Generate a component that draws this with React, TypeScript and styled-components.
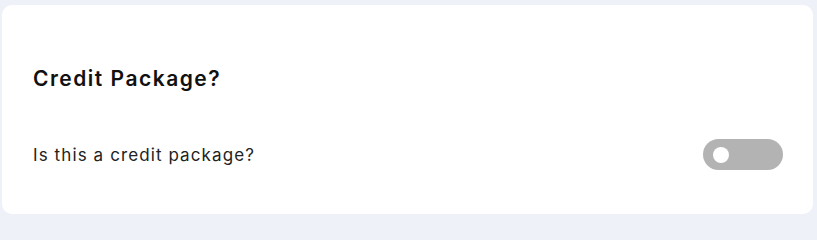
import React from "react";
import styled, { createGlobalStyle } from "styled-components";

const Global = createGlobalStyle`
  html, body { margin: 0; padding: 0; background: #eff1f9; }
  body { font-family: "Inter", "Noto Sans", sans-serif; }
`;

const Page = styled.div`
  width: 817px;
  height: 218px;
  box-sizing: border-box;
  padding: 5px 4px 4px 2px;
  display: flex;
`;

const Card = styled.section`
  flex: 1;
  background: #ffffff;
  border-radius: 10px;
  box-sizing: border-box;
  padding: 62px 30px 0 31px;
  display: flex;
  flex-direction: column;
`;

const Title = styled.h2`
  margin: 0;
  font-family: "Inter", sans-serif;
  font-size: 21px;
  line-height: 24px;
  font-weight: 600;
  letter-spacing: 1.5px;
  color: #111111;
`;

const Row = styled.div`
  margin-top: 48px;
  display: flex;
  align-items: center;
  justify-content: space-between;
`;

const Label = styled.span`
  font-family: "Inter", sans-serif;
  font-size: 17px;
  line-height: 20px;
  letter-spacing: 1.1px;
  color: #222222;
`;

const Track = styled.button<{ $on: boolean }>`
  width: 80px;
  height: 31px;
  border: none;
  padding: 0 0 0 10px;
  border-radius: 16px;
  background: ${(p) => (p.$on ? "#4caf50" : "#b3b3b3")};
  display: flex;
  align-items: center;
  justify-content: ${(p) => (p.$on ? "flex-end" : "flex-start")};
  cursor: pointer;
`;

const Knob = styled.span`
  width: 16px;
  height: 16px;
  border-radius: 50%;
  background: #ffffff;
`;

export default function App() {
  const [on, setOn] = React.useState(false);
  return (
    <>
      <Global />
      <Page>
        <Card>
          <Title>Credit Package?</Title>
          <Row>
            <Label>Is this a credit package?</Label>
            <Track $on={on} onClick={() => setOn(!on)} aria-label="toggle">
              <Knob />
            </Track>
          </Row>
        </Card>
      </Page>
    </>
  );
}
